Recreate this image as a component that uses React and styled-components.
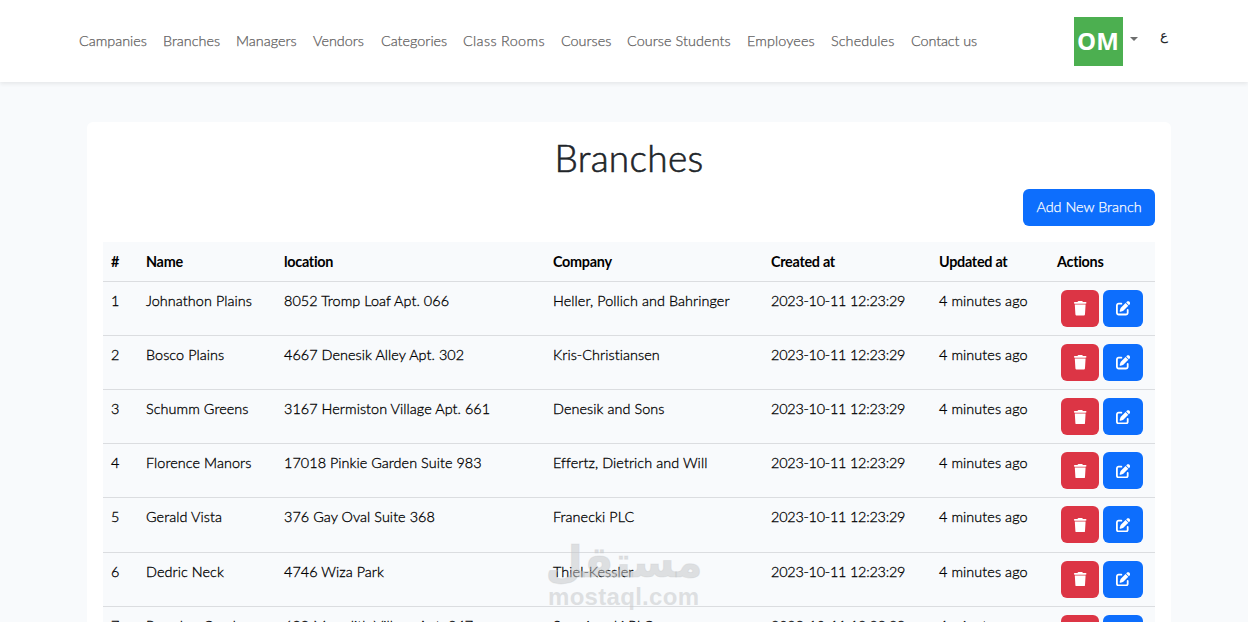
import { FaPenToSquare, FaTrash } from "react-icons/fa6";
import styled, { createGlobalStyle } from "styled-components";

const GlobalStyle = createGlobalStyle`
  * {
    box-sizing: border-box;
  }
  body {
    margin: 0;
    background-color: #f8fafc;
    color: #212529;
    font-family: Lato, sans-serif;
    font-size: 14.4px;
    font-weight: 300;
    line-height: 1.6;
  }
`;

const Page = styled.div`
  height: 622px;
  overflow: hidden;
`;

const Navbar = styled.nav`
  height: 82px;
  background-color: #ffffff;
  box-shadow: 0 2px 4px rgba(0, 0, 0, 0.075);
  display: flex;
  align-items: center;
  justify-content: space-between;
  padding: 0 79px;
`;

const Links = styled.div`
  display: flex;
  gap: 16px;
  padding-bottom: 1px;
`;

const NavLink = styled.a`
  width: ${(props) => props.$width}px;
  color: #5f6060;
  letter-spacing: ${(props) => props.$spacing || 0}px;
  white-space: nowrap;
  -webkit-text-stroke: 0.25px;
`;

const Account = styled.div`
  display: flex;
  align-items: center;
`;

const Avatar = styled.div`
  width: 49px;
  height: 49px;
  margin-top: 1px;
  background-color: #4caf50;
  color: white;
  font-family: "Open Sans", sans-serif;
  font-size: 24px;
  font-weight: 700;
  line-height: 47px;
  text-align: center;
  text-indent: -1px;
`;

const Caret = styled.span`
  margin: -4px 0 0 7px;
  border-top: 4.3px solid #6d6e6e;
  border-left: 4.3px solid transparent;
  border-right: 4.3px solid transparent;
`;

const Language = styled.a`
  margin: -10px 1px 0 22px;
  color: #212529;
  font-family: "DejaVu Sans", sans-serif;
  font-size: 13.5px;
  font-weight: 400;
`;

const Card = styled.main`
  width: 1084px;
  margin: 40px 0 0 87px;
  padding: 16px;
  border-radius: 6px;
  background-color: #ffffff;
  display: flex;
  flex-direction: column;
`;

const Title = styled.h1`
  margin: 0 0 12px;
  font-size: 37px;
  font-weight: 300;
  letter-spacing: 0.3px;
  line-height: 39px;
  text-align: center;
  -webkit-text-stroke: 0.6px;
`;

const Button = styled.button`
  height: 37px;
  width: ${(props) => props.$width}px;
  padding: 0;
  border: 0;
  border-radius: 6px;
  background-color: ${(props) => (props.$danger ? "#dc3545" : "#0d6efd")};
  color: white;
  font: inherit;
  display: inline-flex;
  align-items: center;
  justify-content: center;
`;

const AddButton = styled(Button)`
  align-self: flex-end;
  margin-bottom: 16px;
  padding-bottom: 1px;
  white-space: nowrap;
  -webkit-text-stroke: 0.25px;
`;

const Table = styled.table`
  width: 1052px;
  table-layout: fixed;
  border-collapse: separate;
  border-spacing: 0;
  background-color: #f8fafc;
  color: #000000;
`;

const Col = styled.col`
  width: ${(props) => props.$width}px;
`;

const Th = styled.th`
  padding: 7.5px 8px 8.5px;
  border-bottom: 1px solid #dbdde0;
  font-weight: 700;
  letter-spacing: -0.28px;
  text-align: left;
  white-space: nowrap;
`;

const Td = styled.td`
  height: 54.12px;
  padding: 7px 8px 8px;
  border-bottom: 1px solid #dbdde0;
  letter-spacing: ${(props) => props.$spacing || 0}px;
  vertical-align: top;
  white-space: nowrap;
  -webkit-text-stroke: 0.3px;
`;

const Actions = styled.div`
  display: flex;
  gap: 4px;
  padding: 1px 0 0 4px;
`;

const Watermark = styled.div`
  position: absolute;
  left: 547px;
  top: 538px;
  width: 154px;
  height: 72px;
`;

const links = [
  ["Campanies", 68],
  ["Branches", 57],
  ["Managers", 61],
  ["Vendors", 52],
  ["Categories", 66],
  ["Class Rooms", 82, 0.35],
  ["Courses", 50],
  ["Course Students", 104, 0.08],
  ["Employees", 68, 0.1],
  ["Schedules", 64, 0.1],
  ["Contact us", 66, -0.1],
];

const widths = [35, 138, 269, 218, 168, 118, 106];

const headings = ["#", "Name", "location", "Company", "Created at", "Updated at", "Actions"];

const branches = [
  ["Johnathon Plains", "8052 Tromp Loaf Apt. 066", "Heller, Pollich and Bahringer"],
  ["Bosco Plains", "4667 Denesik Alley Apt. 302", "Kris-Christiansen"],
  ["Schumm Greens", "3167 Hermiston Village Apt. 661", "Denesik and Sons"],
  ["Florence Manors", "17018 Pinkie Garden Suite 983", "Effertz, Dietrich and Will"],
  ["Gerald Vista", "376 Gay Oval Suite 368", "Franecki PLC"],
  ["Dedric Neck", "4746 Wiza Park", "Thiel-Kessler"],
  ["Brandon Creek", "688 Meredith Village Apt. 347", "Swaniawski PLC"],
];

const App = () => {
  return (
    <Page>
      <GlobalStyle />
      <Navbar>
        <Links>
          {links.map(([label, width, spacing]) => (
            <NavLink key={label} $width={width} $spacing={spacing}>
              {label}
            </NavLink>
          ))}
        </Links>
        <Account>
          <Avatar>OM</Avatar>
          <Caret />
          <Language>ع</Language>
        </Account>
      </Navbar>
      <Card>
        <Title>Branches</Title>
        <AddButton $width={132}>Add New Branch</AddButton>
        <Table>
          <colgroup>
            {widths.map((width, i) => (
              <Col key={i} $width={width} />
            ))}
          </colgroup>
          <thead>
            <tr>
              {headings.map((heading) => (
                <Th key={heading}>{heading}</Th>
              ))}
            </tr>
          </thead>
          <tbody>
            {branches.map(([name, location, company], i) => (
              <tr key={name}>
                <Td>{i + 1}</Td>
                <Td $spacing={0.08}>{name}</Td>
                <Td $spacing={0.06}>{location}</Td>
                <Td $spacing={0.08}>{company}</Td>
                <Td $spacing={-0.22}>2023-10-11 12:23:29</Td>
                <Td $spacing={0.08}>4 minutes ago</Td>
                <Td>
                  <Actions>
                    <Button $danger $width={38}>
                      <FaTrash />
                    </Button>
                    <Button $width={40}>
                      <FaPenToSquare />
                    </Button>
                  </Actions>
                </Td>
              </tr>
            ))}
          </tbody>
        </Table>
      </Card>
      <Watermark>
        <svg width="154" height="72" fill="#c6c8ca" fillOpacity="0.55">
          <text
            x="77"
            y="39"
            textAnchor="middle"
            fontFamily="DejaVu Sans"
            fontWeight="700"
            fontSize="43"
            stroke="#c6c8ca"
            strokeOpacity="0.3"
            direction="rtl"
          >
            مستقل
          </text>
          <text x="1" y="67" textLength="151" fontFamily="Liberation Sans" fontWeight="700" fontSize="24">
            mostaql.com
          </text>
        </svg>
      </Watermark>
    </Page>
  );
};

export default App;
